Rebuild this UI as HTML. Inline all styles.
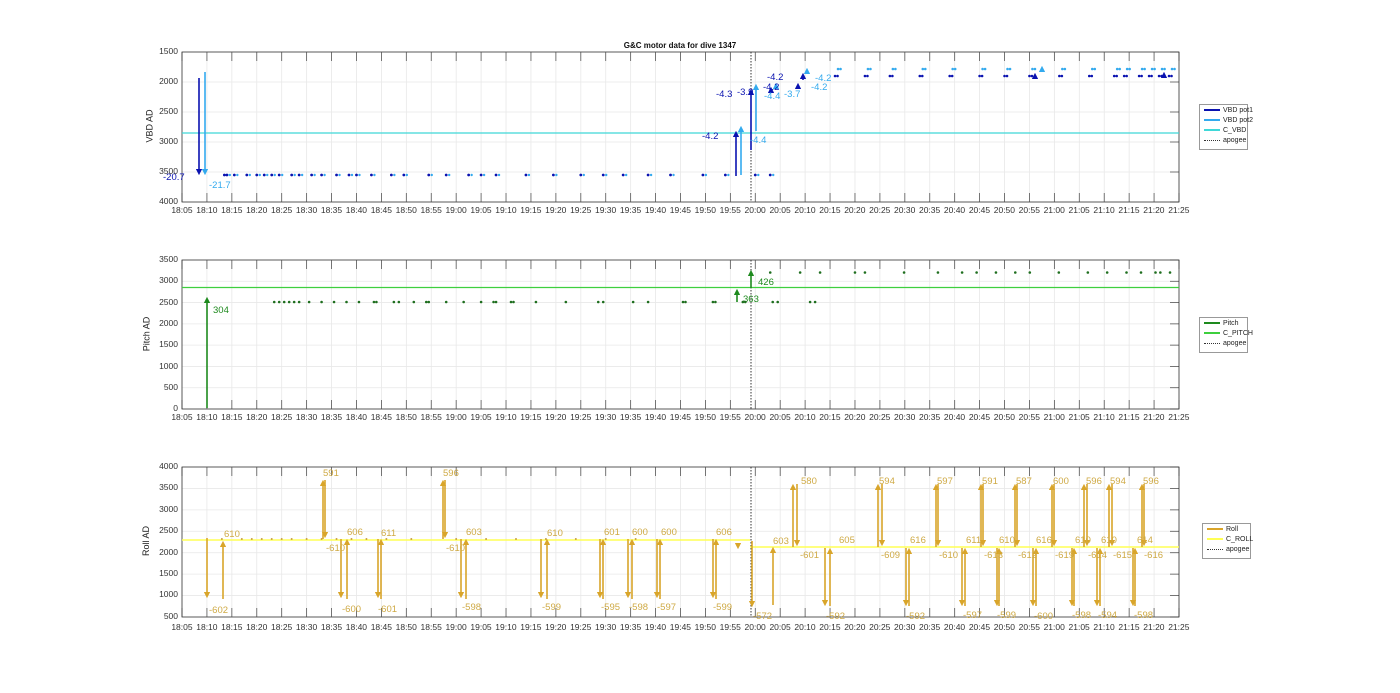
<!DOCTYPE html>
<html><head><meta charset="utf-8"><style>
body{margin:0;width:1400px;height:693px;background:#fff;overflow:hidden;position:relative;font-family:"Liberation Sans",sans-serif}
.xl{position:absolute;left:169.5px;width:1021.9px;display:flex;font-size:8.5px;color:#333}
.xl span{flex:1;text-align:center}
.yl{position:absolute;font-size:8.5px;color:#333;text-align:right;width:40px}
.yt{position:absolute;font-size:9px;color:#222;transform:rotate(-90deg);transform-origin:center;white-space:nowrap}
.lg{position:absolute;border:1px solid #999;background:#fff;font-size:7px;color:#222}
.lg div{height:10px;line-height:10px;white-space:nowrap}
.lg i{display:inline-block;width:16px;height:1.5px;vertical-align:middle;margin:0 3px 0 4px}
svg{position:absolute;left:0;top:0}
</style></head><body>
<svg id="s" width="1400" height="693" xmlns="http://www.w3.org/2000/svg">
<defs>
<marker id="ry" viewBox="0 0 10 10" refX="5" refY="5" markerWidth="4" markerHeight="4" orient="auto"><path d="M0 0L10 5L0 10z" fill="#d9a52a"/></marker>
<marker id="g" viewBox="0 0 10 10" refX="5" refY="5" markerWidth="4" markerHeight="4" orient="auto"><path d="M0 0L10 5L0 10z" fill="#1e8a1e"/></marker>
<marker id="db" viewBox="0 0 10 10" refX="5" refY="5" markerWidth="4" markerHeight="4" orient="auto"><path d="M0 0L10 5L0 10z" fill="#0a12b0"/></marker>
<marker id="lb" viewBox="0 0 10 10" refX="5" refY="5" markerWidth="4" markerHeight="4" orient="auto"><path d="M0 0L10 5L0 10z" fill="#33aaee"/></marker>
</defs>
<g id="grid"></g>
<text x="680" y="48" font-size="8" font-weight="bold" text-anchor="middle" fill="#111">G&amp;C motor data for dive 1347</text>
<line x1="182" y1="133" x2="1179" y2="133" stroke="#3fd8d8" stroke-width="1.2"/>
<g stroke-width="1.6" fill="none">
<line x1="199" y1="78" x2="199" y2="172" stroke="#0a12b0" marker-end="url(#db)"/>
<line x1="205" y1="72" x2="205" y2="172" stroke="#33aaee" marker-end="url(#lb)"/>
<line x1="736" y1="176" x2="736" y2="134" stroke="#0a12b0" marker-end="url(#db)"/>
<line x1="741" y1="175" x2="741" y2="129" stroke="#33aaee" marker-end="url(#lb)"/>
<line x1="751" y1="150" x2="751" y2="92" stroke="#0a12b0" marker-end="url(#db)"/>
<line x1="756" y1="131" x2="756" y2="87" stroke="#33aaee" marker-end="url(#lb)"/>
<line x1="771" y1="92" x2="771" y2="90" stroke="#0a12b0" marker-end="url(#db)"/>
<line x1="776" y1="88" x2="776" y2="86" stroke="#33aaee" marker-end="url(#lb)"/>
<line x1="798" y1="88" x2="798" y2="86" stroke="#0a12b0" marker-end="url(#db)"/>
<line x1="803" y1="80" x2="803" y2="76" stroke="#0a12b0" marker-end="url(#db)"/>
<line x1="807" y1="74" x2="807" y2="71" stroke="#33aaee" marker-end="url(#lb)"/>
<line x1="1035" y1="78" x2="1035" y2="76" stroke="#0a12b0" marker-end="url(#db)"/>
<line x1="1042" y1="71" x2="1042" y2="69" stroke="#33aaee" marker-end="url(#lb)"/>
<line x1="1164" y1="77" x2="1164" y2="75" stroke="#0a12b0" marker-end="url(#db)"/>
</g>
<g font-size="9.5">
<text x="163" y="180" fill="#0a12b0">-20.7</text><text x="209" y="188" fill="#33aaee">-21.7</text>
<text x="702" y="139" fill="#0a12b0">-4.2</text><text x="750" y="143" fill="#33aaee">-4.4</text>
<text x="716" y="97" fill="#0a12b0">-4.3</text><text x="737" y="95" fill="#0a12b0">-3.9</text>
<text x="767" y="80" fill="#0a12b0">-4.2</text><text x="763" y="90" fill="#0a12b0">-4.2</text>
<text x="764" y="99" fill="#33aaee">-4.4</text><text x="784" y="97" fill="#33aaee">-3.7</text>
<text x="815" y="81" fill="#33aaee">-4.2</text><text x="811" y="90" fill="#33aaee">-4.2</text>
</g>
<line x1="182" y1="287.5" x2="1179" y2="287.5" stroke="#3ecf3e" stroke-width="1.2"/>
<g stroke-width="1.6" stroke="#1e8a1e" fill="none">
<line x1="207" y1="408" x2="207" y2="300" marker-end="url(#g)"/>
<line x1="737" y1="302" x2="737" y2="292" marker-end="url(#g)"/>
<line x1="751" y1="288" x2="751" y2="273" marker-end="url(#g)"/>
</g>
<g font-size="9.5" fill="#1e8a1e"><text x="213" y="313">304</text><text x="743" y="302">363</text><text x="758" y="285">426</text></g>
<line x1="182" y1="540" x2="750" y2="540" stroke="#ffff55" stroke-width="1.4"/>
<line x1="750" y1="547" x2="1179" y2="547" stroke="#ffff55" stroke-width="1.4"/>
<g id="roll" stroke="#d9a52a" stroke-width="1.6" fill="none"></g>
<g font-size="9.5" fill="#cfaa45">
<text x="209" y="613">-602</text><text x="224" y="537">610</text>
<text x="323" y="476">591</text><text x="326" y="551">-610</text>
<text x="342" y="612">-600</text><text x="347" y="535">606</text>
<text x="378" y="612">-601</text><text x="381" y="536">611</text>
<text x="443" y="476">596</text><text x="446" y="551">-610</text>
<text x="462" y="610">-598</text><text x="466" y="535">603</text>
<text x="542" y="610">-599</text><text x="547" y="536">610</text>
<text x="601" y="610">-595</text><text x="604" y="535">601</text>
<text x="629" y="610">-598</text><text x="632" y="535">600</text>
<text x="657" y="610">-597</text><text x="661" y="535">600</text>
<text x="713" y="610">-599</text><text x="716" y="535">606</text>
<text x="753" y="619">-572</text><text x="773" y="544">603</text>
<text x="801" y="484">580</text><text x="800" y="558">-601</text>
<text x="826" y="619">-592</text><text x="839" y="543">605</text>
<text x="879" y="484">594</text><text x="881" y="558">-609</text>
<text x="906" y="619">-592</text><text x="910" y="543">616</text>
<text x="937" y="484">597</text><text x="939" y="558">-610</text>
<text x="963" y="618">-597</text><text x="966" y="543">611</text>
<text x="982" y="484">591</text><text x="984" y="558">-613</text>
<text x="997" y="618">-599</text><text x="999" y="543">610</text>
<text x="1016" y="484">587</text><text x="1018" y="558">-612</text>
<text x="1034" y="619">-600</text><text x="1036" y="543">616</text>
<text x="1053" y="484">600</text><text x="1055" y="558">-619</text>
<text x="1072" y="618">-598</text><text x="1075" y="543">610</text>
<text x="1086" y="484">596</text><text x="1088" y="558">-614</text>
<text x="1098" y="618">-594</text><text x="1101" y="543">610</text>
<text x="1110" y="484">594</text><text x="1113" y="558">-615</text>
<text x="1134" y="618">-598</text><text x="1137" y="543">614</text>
<text x="1143" y="484">596</text><text x="1144" y="558">-616</text>
</g>
<g id="dots"></g>
</svg>
<div class="xl" style="top:205px"><span>18:05</span><span>18:10</span><span>18:15</span><span>18:20</span><span>18:25</span><span>18:30</span><span>18:35</span><span>18:40</span><span>18:45</span><span>18:50</span><span>18:55</span><span>19:00</span><span>19:05</span><span>19:10</span><span>19:15</span><span>19:20</span><span>19:25</span><span>19:30</span><span>19:35</span><span>19:40</span><span>19:45</span><span>19:50</span><span>19:55</span><span>20:00</span><span>20:05</span><span>20:10</span><span>20:15</span><span>20:20</span><span>20:25</span><span>20:30</span><span>20:35</span><span>20:40</span><span>20:45</span><span>20:50</span><span>20:55</span><span>21:00</span><span>21:05</span><span>21:10</span><span>21:15</span><span>21:20</span><span>21:25</span></div>
<div class="xl" style="top:412px"><span>18:05</span><span>18:10</span><span>18:15</span><span>18:20</span><span>18:25</span><span>18:30</span><span>18:35</span><span>18:40</span><span>18:45</span><span>18:50</span><span>18:55</span><span>19:00</span><span>19:05</span><span>19:10</span><span>19:15</span><span>19:20</span><span>19:25</span><span>19:30</span><span>19:35</span><span>19:40</span><span>19:45</span><span>19:50</span><span>19:55</span><span>20:00</span><span>20:05</span><span>20:10</span><span>20:15</span><span>20:20</span><span>20:25</span><span>20:30</span><span>20:35</span><span>20:40</span><span>20:45</span><span>20:50</span><span>20:55</span><span>21:00</span><span>21:05</span><span>21:10</span><span>21:15</span><span>21:20</span><span>21:25</span></div>
<div class="xl" style="top:622px"><span>18:05</span><span>18:10</span><span>18:15</span><span>18:20</span><span>18:25</span><span>18:30</span><span>18:35</span><span>18:40</span><span>18:45</span><span>18:50</span><span>18:55</span><span>19:00</span><span>19:05</span><span>19:10</span><span>19:15</span><span>19:20</span><span>19:25</span><span>19:30</span><span>19:35</span><span>19:40</span><span>19:45</span><span>19:50</span><span>19:55</span><span>20:00</span><span>20:05</span><span>20:10</span><span>20:15</span><span>20:20</span><span>20:25</span><span>20:30</span><span>20:35</span><span>20:40</span><span>20:45</span><span>20:50</span><span>20:55</span><span>21:00</span><span>21:05</span><span>21:10</span><span>21:15</span><span>21:20</span><span>21:25</span></div>
<div class="yl" style="left:138px;top:46px">1500</div><div class="yl" style="left:138px;top:76px">2000</div><div class="yl" style="left:138px;top:106px">2500</div><div class="yl" style="left:138px;top:136px">3000</div><div class="yl" style="left:138px;top:166px">3500</div><div class="yl" style="left:138px;top:196px">4000</div>
<div class="yl" style="left:138px;top:254px">3500</div><div class="yl" style="left:138px;top:275px">3000</div><div class="yl" style="left:138px;top:297px">2500</div><div class="yl" style="left:138px;top:318px">2000</div><div class="yl" style="left:138px;top:339px">1500</div><div class="yl" style="left:138px;top:361px">1000</div><div class="yl" style="left:138px;top:382px">500</div><div class="yl" style="left:138px;top:403px">0</div>
<div class="yl" style="left:138px;top:461px">4000</div><div class="yl" style="left:138px;top:482px">3500</div><div class="yl" style="left:138px;top:504px">3000</div><div class="yl" style="left:138px;top:525px">2500</div><div class="yl" style="left:138px;top:547px">2000</div><div class="yl" style="left:138px;top:568px">1500</div><div class="yl" style="left:138px;top:589px">1000</div><div class="yl" style="left:138px;top:611px">500</div>
<div class="yt" style="left:133px;top:121px">VBD AD</div>
<div class="yt" style="left:129px;top:329px">Pitch AD</div>
<div class="yt" style="left:131px;top:536px">Roll AD</div>
<div class="lg" style="left:1199px;top:104px;width:47px;height:43px;padding-top:1px">
<div><i style="background:#0a12b0"></i>VBD pot1</div>
<div><i style="background:#33aaee"></i>VBD pot2</div>
<div><i style="background:#3fd8d8"></i>C_VBD</div>
<div><i style="height:0;border-top:1px dotted #333"></i>apogee</div></div>
<div class="lg" style="left:1199px;top:317px;width:47px;height:33px;padding-top:1px">
<div><i style="background:#1e8a1e"></i>Pitch</div>
<div><i style="background:#3ecf3e"></i>C_PITCH</div>
<div><i style="height:0;border-top:1px dotted #333"></i>apogee</div></div>
<div class="lg" style="left:1202px;top:523px;width:47px;height:33px;padding-top:1px">
<div><i style="background:#d9a52a"></i>Roll</div>
<div><i style="background:#ffff55"></i>C_ROLL</div>
<div><i style="height:0;border-top:1px dotted #333"></i>apogee</div></div>
<script>
var NS="http://www.w3.org/2000/svg",grid=document.getElementById('grid'),dots=document.getElementById('dots'),roll=document.getElementById('roll');
function el(p,t,a){var e=document.createElementNS(NS,t);for(var k in a)e.setAttribute(k,a[k]);p.appendChild(e);return e;}
var axes=[[52,202,5],[260,409,7],[467,617,7]];
axes.forEach(function(a){var t=a[0],b=a[1],n=a[2];
 for(var i=0;i<=40;i++){var x=182+i*24.925;el(grid,'line',{x1:x,y1:t,x2:x,y2:b,stroke:'#e8e8e8','stroke-width':0.8});
  el(grid,'line',{x1:x,y1:t,x2:x,y2:t+9,stroke:'#555','stroke-width':0.8});el(grid,'line',{x1:x,y1:b,x2:x,y2:b-9,stroke:'#555','stroke-width':0.8});}
 for(var j=0;j<=n;j++){var y=t+(b-t)*j/n;el(grid,'line',{x1:182,y1:y,x2:1179,y2:y,stroke:'#e8e8e8','stroke-width':0.8});
  el(grid,'line',{x1:1179,y1:y,x2:1170,y2:y,stroke:'#555','stroke-width':0.8});}
 el(grid,'rect',{x:182,y:t,width:997,height:b-t,fill:'none',stroke:'#333','stroke-width':0.8});
 el(grid,'line',{x1:751,y1:t,x2:751,y2:b,stroke:'#333','stroke-width':1,'stroke-dasharray':'1.5,1.5'});});
function X(m){return 182+m*4.985;}
var pre=[8.5,9,10.5,13,15,16.5,18,19.5,22,23.5,26,28,31,33.5,35,38,42,44.5,49.5,53,57.5,60,63,69,74.5,80,84.5,88.5,93.5,98,104.5,109,115,118];
pre.forEach(function(m){el(dots,'circle',{cx:X(m),cy:175,r:1.4,fill:'#0a12b0'});el(dots,'circle',{cx:X(m)+3,cy:175,r:1.2,fill:'#33aaee'});});
var post=[131,137,142,148,154,160,165,170,176,182,187,189,192,194,196,198];
post.forEach(function(m){el(dots,'circle',{cx:X(m),cy:76,r:1.3,fill:'#0a12b0'});el(dots,'circle',{cx:X(m)+2.5,cy:76,r:1.3,fill:'#0a12b0'});el(dots,'circle',{cx:X(m)+3,cy:69,r:1.3,fill:'#33aaee'});el(dots,'circle',{cx:X(m)+5.5,cy:69,r:1.3,fill:'#33aaee'});});
[13.5,14.5,15.5,16.5,17.5,18.5,20.5,23,25.5,28,30.5,33.5,34,37.5,38.5,41.5,44,44.5,48,51.5,55,57.5,58,61,61.5,66,72,78.5,79.5,85.5,88.5,95.5,96,101.5,102,107.5,108,113.5,114.5,121,122].forEach(function(m){el(dots,'circle',{cx:X(m+5),cy:302,r:1.3,fill:'#1e6e1e'});});
[118,124,128,135,137,145,152,157,160,164,168,171,177,183,187,191,194,197,198,200,202,204,206,208,210].forEach(function(m){var x=X(m*0.0+m-(m>140?(m-140)*0.03:0));if(x<1176)el(dots,'circle',{cx:x,cy:272.5,r:1.3,fill:'#1e6e1e'});});
[-2,2,4,6,8,10,12,15,18,21,24,27,31,36,45,51,57,63,69,75,81].forEach(function(m){el(dots,'circle',{cx:X(m+10),cy:539,r:1,fill:'#c9a040'});});
var A=[[207,538,598],[223,599,541],[323,539,480],[325,480,538],[341,539,598],[347,599,539],[378,539,598],[381,599,539],[443,539,480],[445,480,538],[461,539,598],[466,599,539],[541,539,598],[547,599,539],[600,539,598],[603,599,539],[628,539,598],[632,599,539],[657,539,598],[660,599,539],[713,539,598],[716,599,539],[738,545,543],[752,541,607],[773,605,547],[793,547,484],[797,484,546],[825,548,606],[830,606,548],[878,547,484],[882,484,546],[906,548,606],[909,606,548],[936,547,484],[938,484,546],[962,548,606],[965,606,548],[981,547,484],[983,484,546],[997,548,606],[999,606,548],[1015,547,484],[1017,484,546],[1033,548,606],[1036,606,548],[1052,547,484],[1054,484,546],[1072,548,606],[1074,606,548],[1084,547,484],[1087,484,546],[1097,548,606],[1100,606,548],[1109,547,484],[1112,484,546],[1133,548,606],[1135,606,548],[1142,547,484],[1144,484,546]];
A.forEach(function(a){var d=a[2]>a[1]?-3:3;el(roll,'line',{x1:a[0],y1:a[1],x2:a[0],y2:a[2]+d,'marker-end':'url(#ry)'});});
</script>
</body></html>
